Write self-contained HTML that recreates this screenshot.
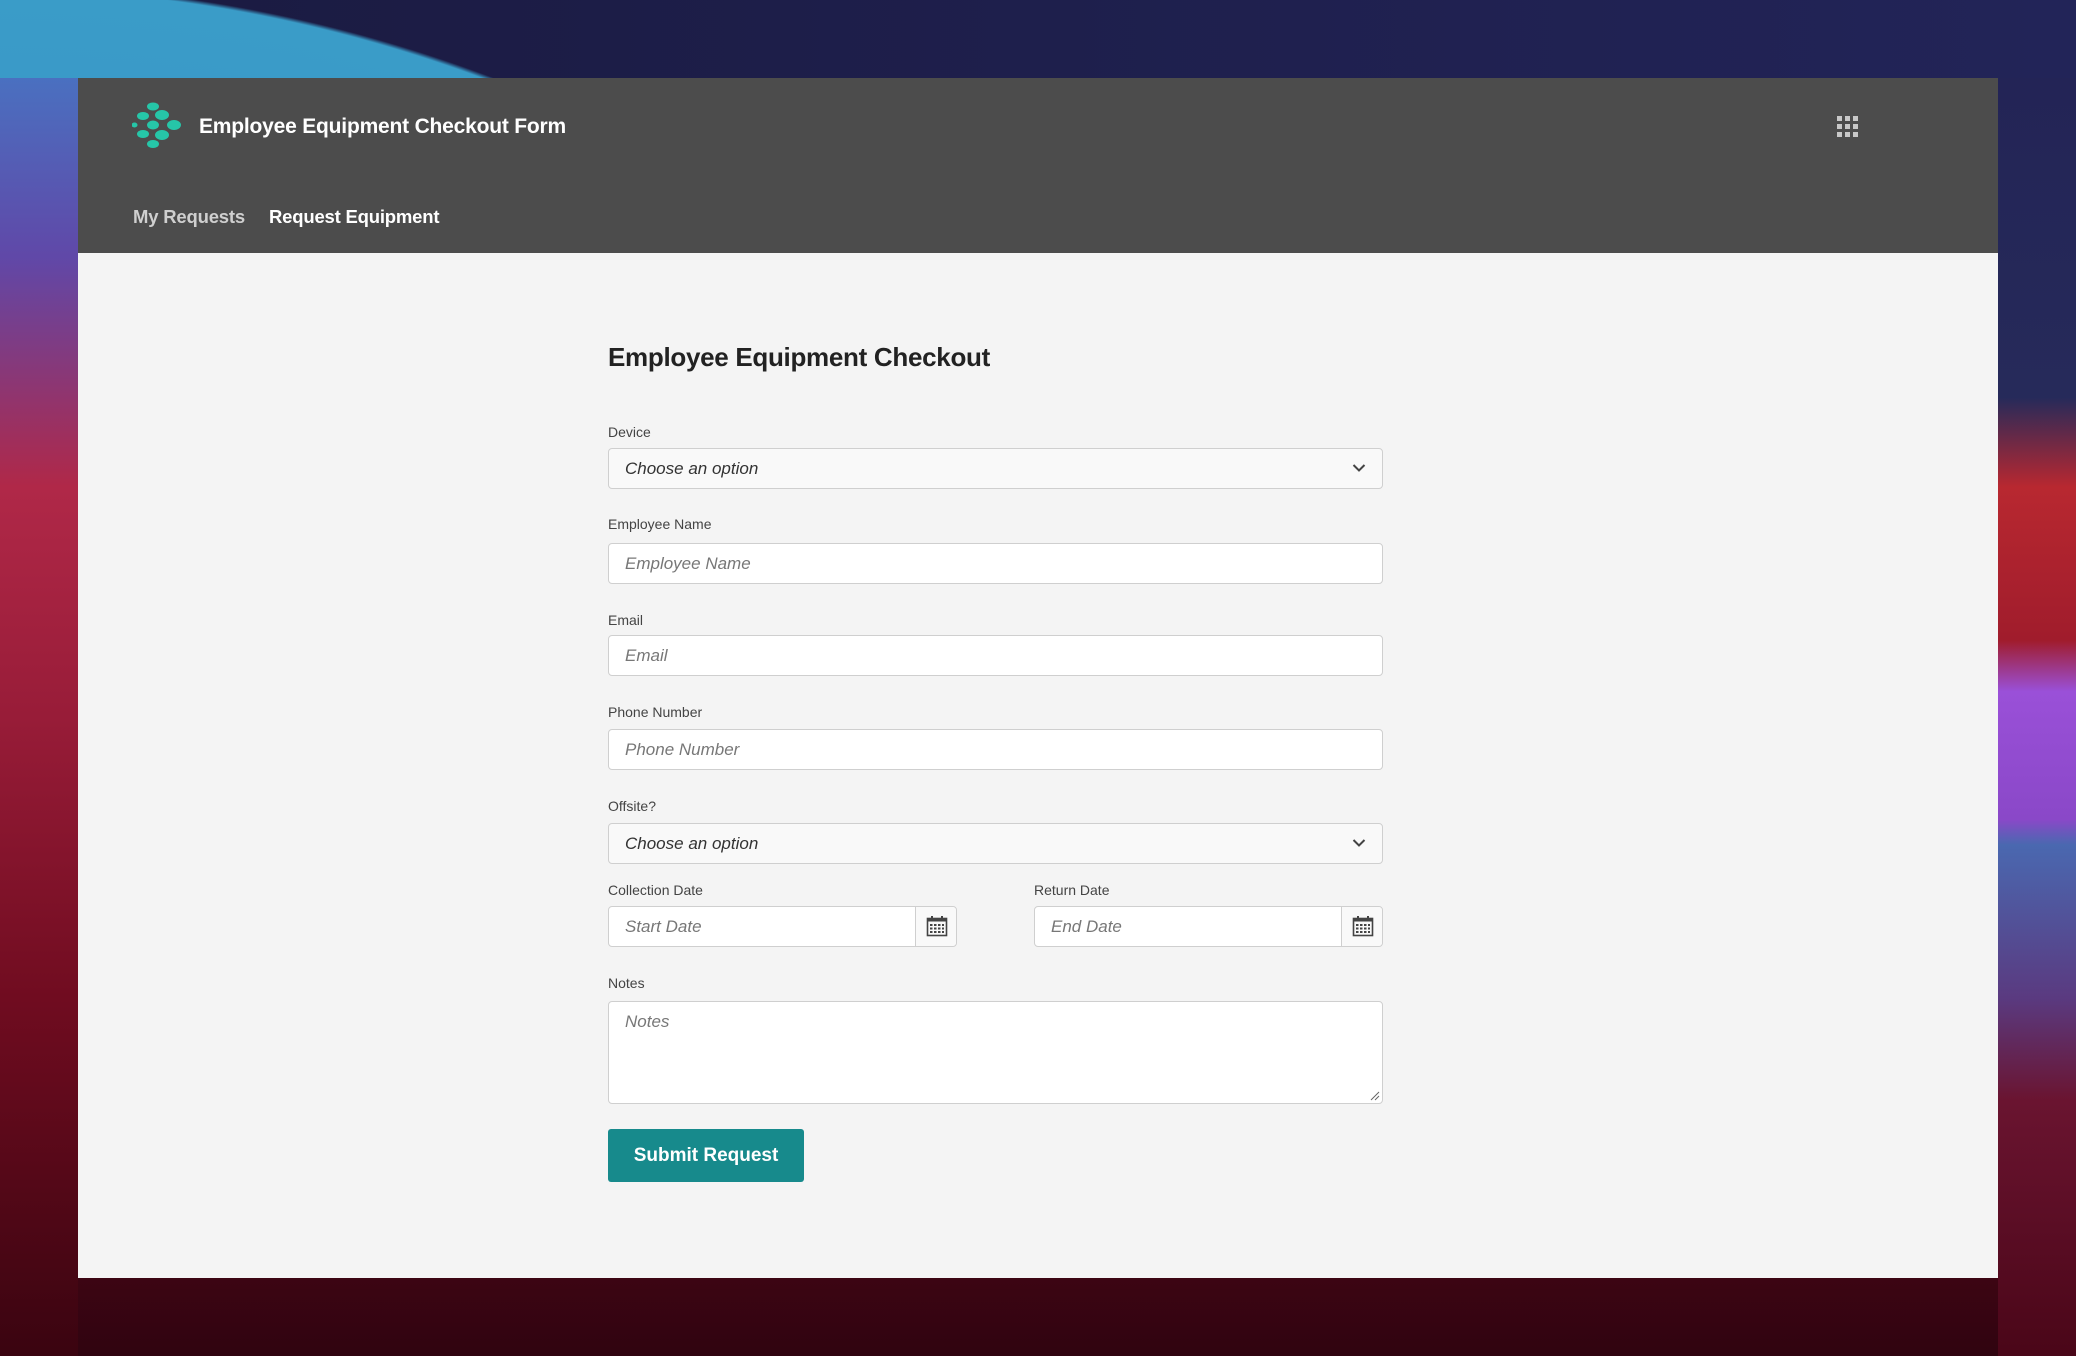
<!DOCTYPE html>
<html><head><meta charset="utf-8"><style>
*{box-sizing:border-box;margin:0;padding:0}
html,body{width:2076px;height:1356px;overflow:hidden}
body{font-family:"Liberation Sans",sans-serif;position:relative;
background:linear-gradient(180deg,#1a1a3e 0%,#222250 30%,#3a1a48 50%,#6a0e22 70%,#4a0616 88%,#300410 100%);}
.topband{position:absolute;left:0;top:0;width:2076px;height:78px;overflow:hidden;
background:radial-gradient(circle 1451px at -19px 1429px,#3a7cc0 0%,#3a9cc8 99.3%,rgba(0,0,0,0) 99.6%),linear-gradient(90deg,#1a1a40,#222458)}
.left{position:absolute;left:0;top:78px;width:78px;height:1278px;background:linear-gradient(180deg,#4a70c0 0%,#6048a8 14%,#b02848 32%,#981c38 50%,#700c20 72%,#3a0410 100%)}
.right{position:absolute;left:1998px;top:78px;width:78px;height:1278px;background:linear-gradient(180deg,#232456 0%,#262a5a 25%,#b82830 32%,#a01c2c 44%,#9a50d8 48%,#8a48c8 58%,#4a68b0 60%,#5a3a80 72%,#6a1430 80%,#4a0618 100%)}
.win{position:absolute;left:78px;top:78px;width:1920px;height:1200px;background:#f4f4f4}
.hdr{position:absolute;left:0;top:0;width:1920px;height:175px;background:#4c4c4c}
.title{position:absolute;left:121px;top:34px;color:#fff;font-weight:bold;font-size:21px;line-height:30px;letter-spacing:-0.2px}
.nav{position:absolute;top:126px;font-size:18.5px;font-weight:bold;line-height:26px;letter-spacing:-0.2px}
.grid{position:absolute;left:1759px;top:38px}
.grid i{position:absolute;width:5px;height:5px;background:#c8c8c8}
h1{position:absolute;left:530px;top:262px;font-size:26px;color:#222;font-weight:bold;line-height:34px;letter-spacing:-0.3px}
.lbl{position:absolute;left:530px;font-size:14px;color:#444;line-height:18px}
.inp{position:absolute;left:530px;width:775px;height:41px;border:1px solid #cfcfcf;border-radius:4px;background:#fff;font-style:italic;color:#777;font-size:17px;line-height:39px;padding-left:16px}
.sel{background:#f9f9f9;color:#333}
.chev{position:absolute;right:16px;top:14px}
.cal{position:absolute;right:0;top:0;width:41px;height:39px;border-left:1px solid #cfcfcf;background:#f9f9f9;border-radius:0 4px 4px 0}
.btn{position:absolute;left:530px;top:1051px;width:196px;height:53px;background:#178a8c;border-radius:3px;color:#fff;font-weight:bold;font-size:19px;line-height:53px;text-align:center}
</style></head><body>
<div class="topband"></div>
<div class="left"></div>
<div class="right"></div>
<div class="win">
 <div class="hdr">
  <svg style="position:absolute;left:54px;top:24px" width="54" height="50" viewBox="0 0 54 50">
   <g fill="#26c6a8">
    <ellipse cx="21" cy="4.5" rx="6" ry="4"/>
    <ellipse cx="11" cy="14" rx="6" ry="4"/>
    <ellipse cx="30" cy="13" rx="7" ry="5"/>
    <ellipse cx="2.5" cy="23" rx="3" ry="2.5"/>
    <ellipse cx="21" cy="23" rx="6" ry="4.5"/>
    <ellipse cx="42" cy="23" rx="7" ry="5"/>
    <ellipse cx="11" cy="32" rx="6" ry="4"/>
    <ellipse cx="30" cy="33" rx="7" ry="5"/>
    <ellipse cx="21" cy="42" rx="6" ry="4"/>
   </g>
  </svg>
  <div class="title">Employee Equipment Checkout Form</div>
  <div class="nav" style="left:55px;color:#cfcfcf">My Requests</div>
  <div class="nav" style="left:191px;color:#fff">Request Equipment</div>
  <div class="grid">
   <i style="left:0;top:0"></i><i style="left:8px;top:0"></i><i style="left:16px;top:0"></i>
   <i style="left:0;top:8px"></i><i style="left:8px;top:8px"></i><i style="left:16px;top:8px"></i>
   <i style="left:0;top:16px"></i><i style="left:8px;top:16px"></i><i style="left:16px;top:16px"></i>
  </div>
 </div>
 <h1>Employee Equipment Checkout</h1>
 <div class="lbl" style="top:345px">Device</div>
 <div class="inp sel" style="top:370px">Choose an option<svg class="chev" width="14" height="10" viewBox="0 0 14 10"><path d="M1.5 2 L7 7.5 L12.5 2" fill="none" stroke="#444" stroke-width="2"/></svg></div>
 <div class="lbl" style="top:437px">Employee Name</div>
 <div class="inp" style="top:465px">Employee Name</div>
 <div class="lbl" style="top:533px">Email</div>
 <div class="inp" style="top:557px">Email</div>
 <div class="lbl" style="top:625px">Phone Number</div>
 <div class="inp" style="top:651px">Phone Number</div>
 <div class="lbl" style="top:719px">Offsite?</div>
 <div class="inp sel" style="top:745px">Choose an option<svg class="chev" width="14" height="10" viewBox="0 0 14 10"><path d="M1.5 2 L7 7.5 L12.5 2" fill="none" stroke="#444" stroke-width="2"/></svg></div>
 <div class="lbl" style="top:803px">Collection Date</div>
 <div class="lbl" style="top:803px;left:956px">Return Date</div>
 <div class="inp" style="top:828px;width:349px">Start Date<div class="cal"><svg style="position:absolute;left:10px;top:8px" width="22" height="22" viewBox="0 0 22 22"><rect x="1.5" y="3.5" width="19" height="17" fill="none" stroke="#444" stroke-width="1.6"/><rect x="1.5" y="3.5" width="19" height="3" fill="#444"/><rect x="5" y="1" width="2" height="4" fill="#444"/><rect x="15" y="1" width="2" height="4" fill="#444"/><g fill="#444"><rect x="4" y="9" width="2.5" height="2"/><rect x="8" y="9" width="2.5" height="2"/><rect x="12" y="9" width="2.5" height="2"/><rect x="16" y="9" width="2" height="2"/><rect x="4" y="12.5" width="2.5" height="2"/><rect x="8" y="12.5" width="2.5" height="2"/><rect x="12" y="12.5" width="2.5" height="2"/><rect x="16" y="12.5" width="2" height="2"/><rect x="4" y="16" width="2.5" height="2"/><rect x="8" y="16" width="2.5" height="2"/><rect x="12" y="16" width="2.5" height="2"/><rect x="16" y="16" width="2" height="2"/></g></svg></div></div>
 <div class="inp" style="top:828px;left:956px;width:349px">End Date<div class="cal"><svg style="position:absolute;left:10px;top:8px" width="22" height="22" viewBox="0 0 22 22"><rect x="1.5" y="3.5" width="19" height="17" fill="none" stroke="#444" stroke-width="1.6"/><rect x="1.5" y="3.5" width="19" height="3" fill="#444"/><rect x="5" y="1" width="2" height="4" fill="#444"/><rect x="15" y="1" width="2" height="4" fill="#444"/><g fill="#444"><rect x="4" y="9" width="2.5" height="2"/><rect x="8" y="9" width="2.5" height="2"/><rect x="12" y="9" width="2.5" height="2"/><rect x="16" y="9" width="2" height="2"/><rect x="4" y="12.5" width="2.5" height="2"/><rect x="8" y="12.5" width="2.5" height="2"/><rect x="12" y="12.5" width="2.5" height="2"/><rect x="16" y="12.5" width="2" height="2"/><rect x="4" y="16" width="2.5" height="2"/><rect x="8" y="16" width="2.5" height="2"/><rect x="12" y="16" width="2.5" height="2"/><rect x="16" y="16" width="2" height="2"/></g></svg></div></div>
 <div class="lbl" style="top:896px">Notes</div>
 <div class="inp" style="top:923px;height:103px;line-height:20px;padding-top:10px">Notes<svg style="position:absolute;right:2px;bottom:2px" width="10" height="10" viewBox="0 0 10 10"><path d="M1 9 L9 1 M5 9 L9 5" stroke="#666" stroke-width="1"/></svg></div>
 <div class="btn">Submit Request</div>
</div>
</body></html>
